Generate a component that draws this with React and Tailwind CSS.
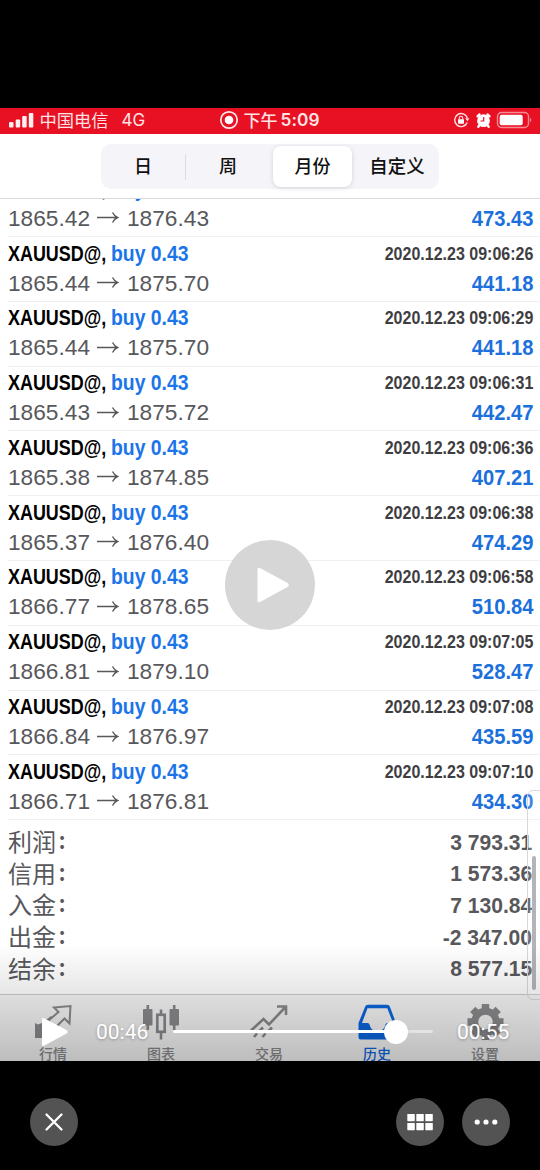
import React from "react";

const deals = [
  ["1865.42", "1876.43", "2020.12.23 09:06:24", "473.43"],
  ["1865.44", "1875.70", "2020.12.23 09:06:26", "441.18"],
  ["1865.44", "1875.70", "2020.12.23 09:06:29", "441.18"],
  ["1865.43", "1875.72", "2020.12.23 09:06:31", "442.47"],
  ["1865.38", "1874.85", "2020.12.23 09:06:36", "407.21"],
  ["1865.37", "1876.40", "2020.12.23 09:06:38", "474.29"],
  ["1866.77", "1878.65", "2020.12.23 09:06:58", "510.84"],
  ["1866.81", "1879.10", "2020.12.23 09:07:05", "528.47"],
  ["1866.84", "1876.97", "2020.12.23 09:07:08", "435.59"],
  ["1866.71", "1876.81", "2020.12.23 09:07:10", "434.30"],
];

const totals = [
  ["利润", "3 793.31"],
  ["信用", "1 573.36"],
  ["入金", "7 130.84"],
  ["出金", "-2 347.00"],
  ["结余", "8 577.15"],
];

function StatusBar() {
  return (
    <div className="flex h-[26px] shrink-0 items-center bg-[#e81123] pl-[9px] pr-[8px] pb-[2px] text-[#ffe3e3]">
      <svg className="h-[16px] w-[25px] shrink-0" viewBox="0 0 25 16" fill="#fff0f0">
        <rect x="0" y="10" width="4.5" height="5.5" rx="1" />
        <rect x="6.7" y="7.5" width="4.5" height="8" rx="1" />
        <rect x="13.2" y="4" width="4.5" height="11.5" rx="1" />
        <rect x="19.8" y="1" width="4.5" height="14.5" rx="1" />
      </svg>
      <span className="ml-[5.500px] w-[82px] whitespace-nowrap text-[17.300px] leading-[26px]">中国电信</span>
      <span className="w-[97px] font-['Inter','Noto_Sans_CJK_SC',sans-serif] text-[17px] leading-[26px]">4G</span>
      <svg className="h-[20px] w-[20px] shrink-0" viewBox="0 0 20 20" fill="none">
        <circle cx="10" cy="10" r="8.2" stroke="#ffe8e8" strokeWidth="1.7" />
        <circle cx="10" cy="10" r="4.3" fill="#fff" />
      </svg>
      <span className="ml-[5px] w-[37px] whitespace-nowrap text-[17px] font-medium leading-[26px]">下午</span>
      <span className="font-['Inter',sans-serif] text-[17.300px] font-semibold leading-[26px] tracking-[0.1px]">5:09</span>
      <div className="ml-auto flex items-center">
        <svg className="h-[18px] w-[18px]" viewBox="0 0 18 18" fill="none" stroke="#ffe3e3" strokeWidth="1.4">
          <path d="M15.4 7.2A6.5 6.5 0 1 0 15.2 11.5" />
          <path d="M13.2 7.3h4.2l-2 3z" fill="#ffe3e3" stroke="none" />
          <rect x="6" y="8.2" width="6" height="4.5" rx=".6" fill="#fff" stroke="none" />
          <path d="M7.3 8.500V7a1.700 1.700 0 0 1 3.400 0v1.500" strokeWidth="1.1" />
        </svg>
        <svg className="ml-[5px] h-[17px] w-[17px]" viewBox="0 0 17 17" fill="none">
          <circle cx="8.5" cy="8.7" r="6.400" fill="#fff" />
          <path d="M2.500 4.300 4.500 2.500M14.500 4.300 12.500 2.500M4.200 13.400l-.9 1.300M12.800 13.400l.9 1.300" stroke="#fff" strokeWidth="2.400" strokeLinecap="round" />
          <path d="M8.700 5v4H5.500" stroke="#e81123" strokeWidth="1.200" />
        </svg>
        <svg className="ml-[4px] h-[18px] w-[36px]" viewBox="0 0 36 18" fill="none">
          <rect x="1.5" y="1.5" width="31" height="15" rx="4" stroke="#f58c93" strokeWidth="1.4" />
          <rect x="3.7" y="3.7" width="23" height="10.600" rx="2" fill="#fff" />
          <path d="M34 7v4q1.300-.6 1.300-2t-1.300-2z" fill="#f58c93" />
        </svg>
      </div>
    </div>
  );
}

function Segments() {
  return (
    <div className="flex h-[65px] shrink-0 justify-center border-b border-[#d9d9db] bg-white pt-[10px] text-[18px] font-medium leading-[24px] text-[#111]">
      <div className="flex h-[45px] w-[338px] items-center rounded-[10px] bg-[#f5f5f9] py-[2px]">
        <div className="flex w-[84px] justify-center pb-[3px]">日</div>
        <div className="h-[26px] w-px bg-[#dcdce1]" />
        <div className="flex w-[84px] justify-center pb-[3px]">周</div>
        <div className="ml-[3px] flex h-[41px] w-[79px] items-center justify-center rounded-[8px] bg-white pb-[3px] shadow-[0_1px_5px_rgba(0,0,0,0.14)]">
          月份
        </div>
        <div className="flex flex-1 justify-center pb-[3px] pl-[3px] text-[18.500px]">自定义</div>
      </div>
    </div>
  );
}

function Deal({ deal }) {
  const [open, close, time, profit] = deal;
  return (
    <div className="ml-[8px] flex h-[64.8px] shrink-0 flex-col border-b border-[#f0f0f2] pr-[7px] pt-[1.500px] font-['Liberation_Sans',Arial,sans-serif]">
      <div className="flex h-[30px] items-center justify-between whitespace-nowrap font-bold">
        <div className="flex text-[22px] leading-[30px]">
          <span className="block w-[103px] origin-left scale-x-[0.815] text-black">XAUUSD@,</span>
          <span className="block w-[78px] origin-left scale-x-[0.88] text-[#1b75e8]">buy 0.43</span>
        </div>
        <span className="block origin-right scale-x-[0.91] text-[17.6px] leading-[30px] text-[#3e3e42]">{time}</span>
      </div>
      <div className="flex h-[29px] items-center justify-between whitespace-nowrap text-[22.7px] leading-[29px]">
        <div className="flex items-center text-[#58585c]">
          <span className="w-[88px]">{open}</span>
          <svg className="mr-[8px] h-[14px] w-[23px]" viewBox="0 0 23 14" fill="none" stroke="#58585c" strokeWidth="1.4">
            <path d="M1 6.500h20.500M16.500 1.500q2 3.800 5 5q-3 1.200-5 5" />
          </svg>
          <span>{close}</span>
        </div>
        <span className="block origin-right scale-x-[0.888] font-bold text-[#1b70db]">{profit}</span>
      </div>
    </div>
  );
}

function Totals() {
  return (
    <div className="flex flex-col pl-[8px] pr-[8px] pt-[6px] text-[#58585c]">
      {totals.map(([label, value]) => (
        <div key={label} className="flex h-[31.7px] items-center justify-between whitespace-nowrap">
          <span className="flex pb-[2px] text-[24px] leading-[28px]">
            {label}
            <span className="-mt-[2px] ml-[2.500px] font-medium">:</span>
          </span>
          <span className="block origin-right scale-x-[0.93] font-['Liberation_Sans',Arial,sans-serif] text-[22.7px] font-bold leading-[31px]">
            {value}
          </span>
        </div>
      ))}
    </div>
  );
}

function Tab({ label, active, children }) {
  return (
    <div className={active ? "flex w-[108px] flex-col items-center text-[#0b66e0]" : "flex w-[108px] flex-col items-center text-[#8a8a8d]"}>
      <svg className="h-[38px] w-[40px] shrink-0" viewBox="0 0 40 38" fill="none" stroke="currentColor" strokeWidth="2">
        {children}
      </svg>
      <span className="mt-[4px] h-[18px] text-[14px] font-medium leading-[19px]">{label}</span>
    </div>
  );
}

function TabBar() {
  return (
    <div className="flex h-[67px] w-[540px] shrink-0 overflow-hidden border-t border-[#c9c9cc] bg-[#f6f6f6] pt-[7px]">
      <div className="-ml-px flex">
        <Tab label="行情">
          <path d="M2 21l3 1.500 4-1.500 9-7 8 8-8 14H2z" fill="currentColor" stroke="none" />
          <path d="M21 5.500 37.500 4 36.500 21.500 31.500 16.500 22 26 15 19 25.500 10z" fill="#f6f6f6" />
        </Tab>
        <Tab label="图表">
          <rect x="2" y="7" width="9.500" height="16.500" rx="1" fill="currentColor" stroke="none" />
          <rect x="28.500" y="7" width="9.500" height="16.500" rx="1" fill="currentColor" stroke="none" />
          <path d="M6.800 3v25M33.200 3v25M20 7.500v5M20 30v7.500" strokeWidth="2.600" />
          <rect x="16.300" y="12.800" width="7.400" height="17" strokeWidth="2.700" />
        </Tab>
        <Tab label="交易">
          <path d="M2 28.500 14.500 17 20 22.500 36 5.500M28 4.500h9v8.500" strokeWidth="2.600" />
          <path d="M5 35l3-3.500M10 29.500l4-4M13.500 35l3-3.500M19 29.500l4-4" strokeWidth="2.600" />
        </Tab>
        <Tab label="历史" active>
          <path
            fill="currentColor"
            stroke="none"
            fillRule="evenodd"
            d="M8 5Q8.600 2.800 11 2.800H30Q32.400 2.800 33 5L39 21V35Q39 37.500 36.500 37.500H4Q1.500 37.500 1.500 35V21ZM10.500 6.200 5 21H10.500Q12.500 21 13 24Q14.300 29 20.500 29T28 24Q28.500 21 30.500 21H36L30.300 6.200Z"
          />
        </Tab>
        <Tab label="设置">
          <circle cx="20.500" cy="20" r="10.800" strokeWidth="7" />
          <path d="M20.500 2v6M20.500 32v6M2.500 20h6M32.500 20h6M7.800 7.300l4 4M29.200 28.700l4 4M33.200 7.300l-4 4M11.800 28.700l-4 4" strokeWidth="7.500" />
        </Tab>
      </div>
    </div>
  );
}

function PlayerControls() {
  return (
    <div className="absolute inset-x-0 bottom-0 flex h-[59px] items-center font-['Roboto',sans-serif] text-[21px] text-white">
      <svg className="ml-[41px] h-[30px] w-[28px] shrink-0" viewBox="0 0 28 30" fill="#fff">
        <path d="M1 2.500Q1 .2 3 1.200L25.500 13Q28 15 25.500 16.600L3 28.800Q1 29.500 1 27.500z" />
      </svg>
      <span className="ml-[27px] w-[53px] pt-[2px] [text-shadow:0_1px_3px_rgba(0,0,0,0.3)]">00:46</span>
      <div className="ml-[24px] flex w-[260px] items-center">
        <div className="h-[3px] w-[212px] rounded-full bg-white" />
        <div className="-ml-[1px] h-[24px] w-[24px] shrink-0 rounded-full bg-white" />
        <div className="h-[3px] flex-1 rounded-full bg-white/45" />
      </div>
      <span className="ml-[24px] pt-[2px] [text-shadow:0_1px_3px_rgba(0,0,0,0.3)]">00:55</span>
    </div>
  );
}

function RoundButton({ children }) {
  return (
    <button className="flex h-[48px] w-[48px] items-center justify-center rounded-full bg-[#535353]">
      <svg className="h-[28px] w-[28px]" viewBox="0 0 28 28" fill="#fff">{children}</svg>
    </button>
  );
}

export default function App() {
  return (
    <div className="flex h-[1170px] w-[540px] flex-col overflow-hidden bg-black pt-[108px] font-['Noto_Sans_CJK_SC',sans-serif]">
      <div className="relative flex h-[953px] shrink-0 flex-col overflow-hidden bg-white">
        <StatusBar />
        <Segments />
        <div className="flex min-h-0 flex-1 flex-col overflow-hidden">
          <div className="-mt-[26.8px] flex shrink-0 flex-col">
            {deals.map((deal) => (
              <Deal key={deal[2]} deal={deal} />
            ))}
          </div>
          <Totals />
        </div>
        <TabBar />
        <div className="absolute -right-[4px] top-[682px] h-[210px] w-[17px] rounded-[6px] border border-[#d8d8da] bg-white/15">
          <div className="ml-[4px] mt-[65px] h-[134px] w-[4px] rounded-full bg-[#b4b4b6]" />
        </div>
        <div className="absolute inset-x-0 bottom-0 h-[118px] bg-linear-to-b from-black/0 to-black/23" />
        <div className="absolute left-[225px] top-[432px] flex h-[90px] w-[90px] items-center justify-center rounded-full bg-[#d6d6d6]">
          <svg className="ml-[6px] h-[36px] w-[34px]" viewBox="0 0 34 36" fill="#fff">
            <path d="M1.500 2.500Q1.500 0 4 1L31.500 16Q34 18 31.500 20L4 35Q1.500 36 1.500 33.500z" />
          </svg>
        </div>
        <PlayerControls />
      </div>
      <div className="flex h-[109px] shrink-0 items-center pl-[30px] pr-[30px] pt-[13px]">
        <RoundButton>
          <path d="M6.500 6.500l15 15M21.500 6.500l-15 15" stroke="#fff" strokeWidth="2.300" strokeLinecap="round" />
        </RoundButton>
        <div className="ml-auto flex gap-[18px]">
          <RoundButton>
            {[1.3, 10.3, 19.3].map((x) => (
              <g key={x}>
                <rect x={x} y="6" width="7.500" height="7.200" rx=".6" />
                <rect x={x} y="15" width="7.500" height="7.200" rx=".6" />
              </g>
            ))}
          </RoundButton>
          <RoundButton>
            <circle cx="5.200" cy="14" r="2.600" />
            <circle cx="14" cy="14" r="2.600" />
            <circle cx="22.800" cy="14" r="2.600" />
          </RoundButton>
        </div>
      </div>
    </div>
  );
}
